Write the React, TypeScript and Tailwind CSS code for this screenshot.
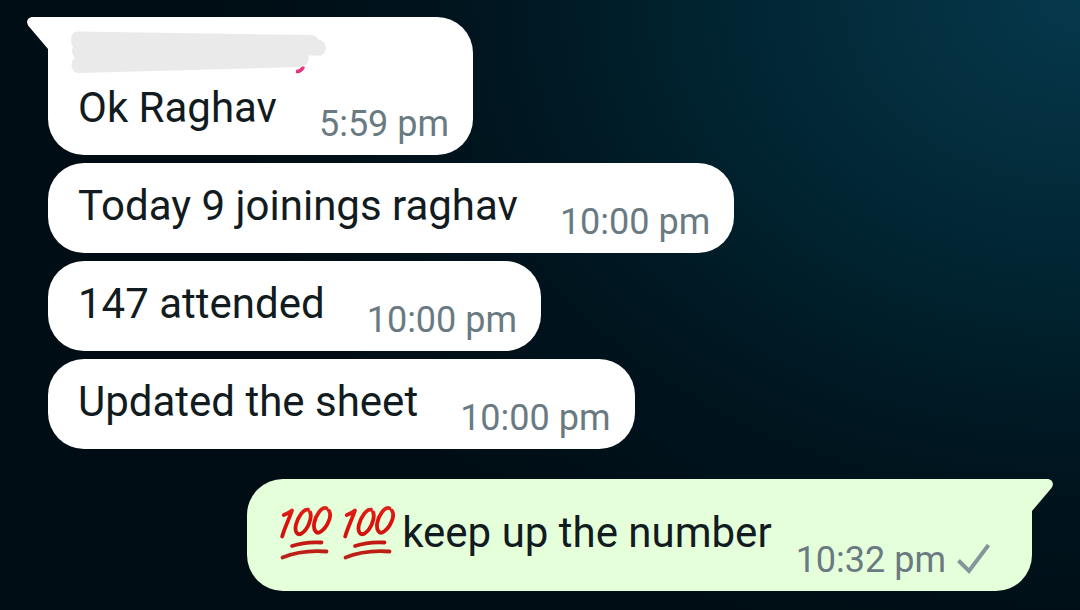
import React from "react";

type Message = { text: string; time: string };

const followUps: Message[] = [
  { text: "Today 9 joinings raghav", time: "10:00 pm" },
  { text: "147 attended", time: "10:00 pm" },
  { text: "Updated the sheet", time: "10:00 pm" },
];

function Hundred() {
  return (
    <svg
      role="img"
      aria-label="100"
      viewBox="5 5 52 56"
      className="h-14 w-[52px] shrink-0"
      fill="none"
      strokeLinecap="round"
      strokeLinejoin="round"
    >
      <defs>
        <linearGradient id="hundred-red" gradientUnits="userSpaceOnUse" x1="0" y1="5" x2="0" y2="61">
          <stop offset="0" stopColor="#d92a20" />
          <stop offset="0.25" stopColor="#e30f0c" />
          <stop offset="0.6" stopColor="#c9150f" />
          <stop offset="1" stopColor="#b3261d" />
        </linearGradient>
      </defs>
      <g stroke="url(#hundred-red)" strokeWidth="3.8">
        <path d="M8.800 15C11.500 14 14.500 12.500 17 10.500C14.500 18 9.500 28 7.200 36.500" />
        <path d="M33 9.700C28.500 8.500 23 17 21 24.500C19.300 31.500 22 35.800 26.500 33.500C32 30.500 37.500 19 35.200 12.500" />
        <path d="M51.500 8.200C46.500 6.200 40.500 16 39.200 23C38 30.500 41.500 34.700 46 31.500C52 27.500 57.500 16 54 10.800" />
        <path d="M17 46Q30 41.500 46.500 42.500" />
        <path d="M7.500 57.500Q27 49.500 51.500 51.500" />
      </g>
    </svg>
  );
}

function Tick() {
  return (
    <svg
      role="img"
      aria-label="Sent"
      viewBox="0 0 34 32"
      className="h-8 w-[34px] shrink-0"
      fill="none"
      stroke="#84969a"
      strokeWidth="4"
    >
      <path d="M1.500 16.500L12 27L31.500 1" />
    </svg>
  );
}

function Time({ value }: { value: string }) {
  return <time className="block shrink-0 text-4xl/10 whitespace-nowrap text-[#6a7a82]">{value}</time>;
}

function Tail({ className }: { className: string }) {
  return (
    <svg viewBox="0 0 58 34" className={`absolute top-0 h-[34px] w-[58px] ${className}`} fill="currentColor" aria-hidden="true">
      <path d="M58 0H6C0.500 0-1.500 5 1.500 9L21 32V34H58Z" />
    </svg>
  );
}

export default function App() {
  return (
    <main className="min-h-screen bg-[#000c12] bg-[radial-gradient(ellipse_80%_110%_at_100%_0%,#06384c_0%,#042f3f_20%,#00212d_48%,#00151f_70%,#000d14_100%)] pt-[17px] pr-12 pb-[19px] pl-12 font-[Roboto,'Liberation_Sans',sans-serif] text-[42px]/[48px] text-[#111b20]">
      <ul className="flex flex-col items-start gap-2">
        <li className="relative rounded-[36px] rounded-tl-none bg-white pt-3 pr-6 pl-[30px]">
          <Tail className="-left-[21px] text-white" />
          <svg viewBox="0 0 260 48" className="relative -ml-2 h-12 w-[260px]" role="img" aria-label="Hidden sender name">
            <path d="M226 42.500Q231 43 233.500 37.500" fill="none" stroke="#e5317b" strokeWidth="3.500" />
            <path
              d="M8 2.500L240 6Q246 6 249 11C259 12 257 27 249 26.500H239Q239 37 231 38L9 44C1 44-1 33 5 29Q0 24 3 18C-1 12 1 2.500 8 2.500Z"
              fill="#eaeaea"
            />
          </svg>
          <div className="flex items-end gap-[42px]">
            <p className="pt-[7px] pb-[23px]">Ok Raghav</p>
            <div className="pb-[11px]">
              <Time value="5:59 pm" />
            </div>
          </div>
        </li>
        {followUps.map((message) => (
          <li key={message.text} className="flex items-end gap-[42px] rounded-[36px] bg-white pt-[19px] pr-6 pl-[30px]">
            <p className="pb-[23px]">{message.text}</p>
            <div className="pb-[11px]">
              <Time value={message.time} />
            </div>
          </li>
        ))}
        <li className="relative mt-[22px] flex items-end gap-6 self-end rounded-[36px] rounded-tr-none bg-[#e5ffdb] pt-[26px] pr-[41px] pl-[33px]">
          <Tail className="-right-[21px] -scale-x-100 text-[#e5ffdb]" />
          <div className="flex items-center gap-[11px] pb-[30px]">
            <Hundred />
            <Hundred />
            <p className="-ml-1">keep up the number</p>
          </div>
          <div className="relative flex items-center gap-[11px] pb-[11px]">
            <Time value="10:32 pm" />
            <Tick />
          </div>
        </li>
      </ul>
    </main>
  );
}
